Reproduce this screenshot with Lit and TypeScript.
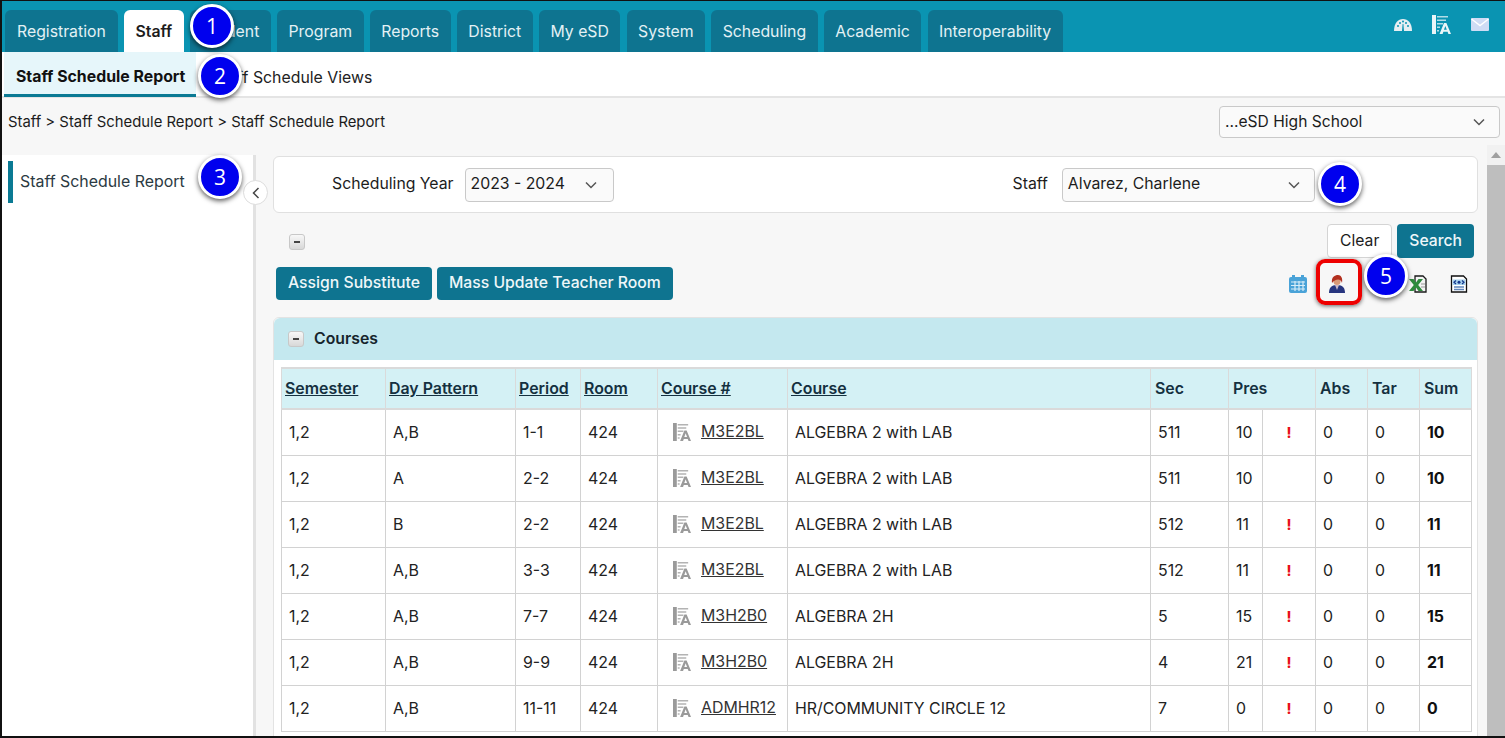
import { LitElement, html, css, svg } from "lit";
import { customElement } from "lit/decorators.js";

const TABS = ["Registration", "Staff", "Student", "Program", "Reports", "District", "My eSD", "System", "Scheduling", "Academic", "Interoperability"];
const ROWS = [
  ["1,2", "A,B", "1-1", "424", "M3E2BL", "ALGEBRA 2 with LAB", "511", "10", true, "0", "0", "10"],
  ["1,2", "A", "2-2", "424", "M3E2BL", "ALGEBRA 2 with LAB", "511", "10", false, "0", "0", "10"],
  ["1,2", "B", "2-2", "424", "M3E2BL", "ALGEBRA 2 with LAB", "512", "11", true, "0", "0", "11"],
  ["1,2", "A,B", "3-3", "424", "M3E2BL", "ALGEBRA 2 with LAB", "512", "11", true, "0", "0", "11"],
  ["1,2", "A,B", "7-7", "424", "M3H2B0", "ALGEBRA 2H", "5", "15", true, "0", "0", "15"],
  ["1,2", "A,B", "9-9", "424", "M3H2B0", "ALGEBRA 2H", "4", "21", true, "0", "0", "21"],
  ["1,2", "A,B", "11-11", "424", "ADMHR12", "HR/COMMUNITY CIRCLE 12", "7", "0", true, "0", "0", "0"],
];
const COLS = [104, 130, 65, 77, 130, 363, 78, 34, 53, 52, 52, 52];
const chevron = svg`<svg class="chev" viewBox="0 0 12 8" width="12" height="8"><path d="M1 1.5 6 6.5 11 1.5" fill="none" stroke="#555" stroke-width="1.5"/></svg>`;
const faIcon = (c: string, w = 19, h = 19) => svg`<svg viewBox="0 0 19 19" width=${w} height=${h}><rect x="0" y="0" width="4" height="19" fill=${c}/><path d="M5 1h11v1.6H5zM5 4.5h9v1.6H5zM5 8h6v1.6H5zM5 11.5h3v1.6H5zM5 15h2v1.6H5z" fill=${c} opacity=".75"/><path d="M7.5 19 12 8h2.4L19 19h-2.6l-.8-2.2h-4.2l-.8 2.2zM11.9 14.8h2.9l-1.4-3.9z" fill=${c}/></svg>`;

@customElement("app-root")
export class AppRoot extends LitElement {
  static styles = css`
    :host { display: block; width: 1505px; height: 738px; font-family: Inter, "Liberation Sans", sans-serif; color: #1c1c1c; }
    * { box-sizing: border-box; }
    .page { position: relative; width: 1505px; height: 738px; overflow: hidden; display: flex; flex-direction: column; background: #f7f7f7;
      border-top: 1px solid #111; border-left: 2px solid #111; border-bottom: 2px solid #111; }
    .top { height: 51px; flex: none; background: #0a94b2; display: flex; align-items: flex-end; justify-content: space-between; padding-left: 3px; }
    .tabs { display: flex; gap: 6.2px; }
    .tab { height: 42px; padding: 0 11.5px; border-radius: 6px 6px 0 0; background: #0e7490; color: #e3f1f5; font-size: 15.8px; display: flex; align-items: center; }
    .tab:first-child { padding-left: 12px; padding-right: 12px; }
    .tab.on { background: #fff; color: #1c1c1c; font-weight: 600; }
    .topicons { align-self: flex-start; display: flex; align-items: center; gap: 20px; padding: 14px 16px 0 0; }
    .sub { height: 46px; flex: none; background: #fff; display: flex; align-items: stretch; padding-left: 2px; border-bottom: 2px solid #e4e4e4; }
    .sub div { font-size: 15.85px; padding: 6px 12px 0; display: flex; align-items: center; }
    .sub .on { width: 192px; font-weight: 700; background: #e6f6fa; border-bottom: 3px solid #0a7a94; color: #111; white-space: nowrap; margin-bottom: -1px; }
    .sub .other { padding-left: 17px; white-space: nowrap; color: #222; }
    .crumbrow { height: 57px; flex: none; display: flex; justify-content: space-between; padding: 8px 5px 0 6px; }
    .crumb { font-size: 14.85px; line-height: 33px; height: 32px; }
    .sel { background: #fafafa; border: 1px solid #c9c9c9; border-radius: 4px; display: flex; align-items: center; justify-content: space-between; font-size: 15.8px; }
    .sel span { padding-bottom: 2px; }
    .school { width: 281px; height: 32px; padding: 0 14px 0 5px; font-size: 15.6px; }
    .body { flex: 1; display: flex; min-height: 0; }
    .side { width: 254px; flex: none; background: #fff; border-right: 3px solid #e2e2e2; padding: 6px 0 0 6px; }
    .sideitem { height: 42px; border-left: 5px solid #0a7a94; padding: 0 0 2px 7px; font-size: 15.9px; color: #2b3a42; display: flex; align-items: center; }
    .collapse { position: absolute; left: 241px; top: 179px; width: 25px; height: 25px; background: #fff; border: 1px solid #ddd; border-radius: 50%; display: flex; align-items: center; justify-content: center; }
    .main { width: 1231px; flex: none; padding: 1px 9px 0 17px; min-width: 0; }
    .filter { height: 57px; background: #fff; border: 1px solid #e0e0e0; border-radius: 6px; display: flex; align-items: center; font-size: 15.8px; }
    .lbl1 { margin-left: 58px; margin-right: 11px; padding-bottom: 2px; }
    .year { width: 149px; height: 34px; padding: 0 16px 0 5px; }
    .lbl2 { margin-left: 399px; margin-right: 14px; padding-bottom: 2px; }
    .staff { width: 253px; height: 34px; padding: 0 14px 0 5px; }
    .actions { height: 46px; padding: 11px 4px 0 16px; display: flex; justify-content: space-between; }
    .mini { width: 16px; height: 16px; margin-top: 10px; border: 1px solid #c8c8c8; border-radius: 3px; background: linear-gradient(#f8f8f8, #d8d8d8); display: flex; align-items: center; justify-content: center; flex: none; }
    .mini i { display: block; width: 6px; height: 2px; background: #444; }
    .rightbtns { display: flex; gap: 5px; }
    .btn { height: 34px; padding: 0 12px 2px; border-radius: 4px; background: #0e7490; color: #eef7f9; font-size: 15.7px; font-weight: 500; display: flex; align-items: center; border: 0; white-space: nowrap; }
    .btn.plain { background: #fff; color: #1c1c1c; border: 1px solid #d4d4d4; font-weight: 400; margin-left: 1px; }
    .tools { height: 58px; padding: 8px 0 0 3px; display: flex; justify-content: space-between; align-items: flex-start; }
    .tools .l { display: flex; gap: 5px; }
    .tools .btn { height: 33px; font-size: 15.75px; }
    .tools .r { display: flex; align-items: center; height: 33px; margin-right: -1px; }
    .tools .r span { width: 41px; display: flex; justify-content: center; }
    .tools .r .cal { margin-right: -2px; }
    .tools .r .xl { margin-left: 40px; }
    .panel { background: #fff; border: 1px solid #e3e3e3; border-radius: 6px 6px 0 0; padding-bottom: 10px; }
    .phead { height: 42px; background: #c4e8ef; border-radius: 6px 6px 0 0; display: flex; align-items: center; gap: 10px; padding: 0 0 2px 14px; font-weight: 600; font-size: 15.8px; color: #16242c; }
    .phead .mini { margin: 2px 0 0; }
    table { border-collapse: collapse; table-layout: fixed; width: 1190px; margin: 7px 0 0 7px; font-size: 15.9px; }
    th { height: 41px; background: #d4f1f5; border: 2px solid #dadada; border-width: 2px 1px; text-align: left; padding: 0 0 0 3px; font-weight: 600; font-size: 15.9px; color: #14303f; text-decoration: underline; white-space: nowrap; }
    th.nu { text-decoration: none; padding-left: 4px; }
    td { height: 46px; border: 1.5px solid #d2d2d2; padding: 0 0 0 7px; color: #222; white-space: nowrap; }
    td b { font-weight: 700; color: #111; }
    .course { display: flex; align-items: center; gap: 9px; padding-left: 8px; }
    .course u { color: #333; position: relative; top: -1px; left: 1px; }
    td.warn { text-align: center; padding: 0; color: #e8101a; font-weight: 800; font-size: 14px; }
    .scroll { flex: 1; background: #f1f1f1; margin-top: -10px; position: relative; display: flex; flex-direction: column; }
    .scroll .up { height: 20px; flex: none; display: flex; justify-content: center; padding-top: 7px; }
    .scroll .thumb { flex: 1; background: #bebebe; }
    .bub { position: absolute; width: 44px; height: 44px; border-radius: 50%; background: #0000ee; border: 3px solid #fff; box-shadow: 0 2px 5px rgba(0,0,0,.65); color: #fff; font-size: 21px; font-family: "Open Sans", "Liberation Sans", sans-serif; display: flex; align-items: center; justify-content: center; }
    .hl { position: absolute; left: 1314px; top: 258px; width: 46px; height: 46px; border: 4px solid #ee0000; border-radius: 9px; box-shadow: 0 1px 4px rgba(0,0,0,.6); }
  `;

  render() {
    return html`<div class="page">
      <div class="top">
        <div class="tabs">${TABS.map((t) => html`<div class="tab ${t === "Staff" ? "on" : ""}">${t}</div>`)}</div>
        <div class="topicons">
          <svg viewBox="0 0 18 14" width="18" height="14"><path d="M0 13C0 5 4 1 9 1s9 4 9 12z" fill="#e6eef2"/><g fill="#0a94b2"><circle cx="4" cy="8" r="1"/><circle cx="6" cy="5" r="1"/><circle cx="9" cy="3.6" r="1"/><circle cx="12" cy="5" r="1"/><circle cx="14" cy="8" r="1"/><path d="M8 13l.6-7h.8l.6 7z"/></g></svg>
          ${faIcon("#eaf5f8")}
          <svg viewBox="0 0 18 13" width="18" height="13"><rect width="18" height="13" rx="1" fill="#cfdcf5"/><path d="M.5 1 9 7.5 17.5 1" fill="none" stroke="#fff" stroke-width="1.4"/></svg>
        </div>
      </div>
      <div class="sub"><div class="on">Staff Schedule Report</div><div class="other">Staff Schedule Views</div></div>
      <div class="crumbrow"><div class="crumb">Staff &gt; Staff Schedule Report &gt; Staff Schedule Report</div><div class="sel school"><span>...eSD High School</span>${chevron}</div></div>
      <div class="body">
        <div class="side"><div class="sideitem">Staff Schedule Report</div></div>
        <div class="main">
          <div class="filter">
            <span class="lbl1">Scheduling Year</span>
            <div class="sel year"><span>2023 - 2024</span>${chevron}</div>
            <span class="lbl2">Staff</span>
            <div class="sel staff"><span>Alvarez, Charlene</span>${chevron}</div>
          </div>
          <div class="actions">
            <div class="mini"><i></i></div>
            <div class="rightbtns"><div class="btn plain">Clear</div><div class="btn">Search</div></div>
          </div>
          <div class="tools">
            <div class="l"><div class="btn">Assign Substitute</div><div class="btn">Mass Update Teacher Room</div></div>
            <div class="r">
              <span class="cal"><svg viewBox="0 0 18 18" width="18" height="18"><rect x="0" y="2" width="18" height="16" rx="2" fill="#4aa3d8"/><rect x="3" y="0" width="3" height="4" fill="#4aa3d8"/><rect x="12" y="0" width="3" height="4" fill="#4aa3d8"/><path d="M2 7h14M2 10.5h14M2 14h14M6 6v10M10 6v10M14 6v10" stroke="#d8edf8" stroke-width="1.2"/></svg></span>
              <span><svg viewBox="0 0 16 18" width="16" height="18"><path d="M0 18c0-5 2-8 8-8s8 3 8 8z" fill="#27357f"/><path d="M6 10l2 5 2-5z" fill="#c9b8c8"/><circle cx="8" cy="6.500" r="3.500" fill="#d99a78"/><path d="M3 8C2 2 6 0 9 0s5 3 4 8c-.5-2-2-3.500-4-3.500S4.500 6 3 8z" fill="#b2301f"/></svg></span>
              <span class="xl"><svg viewBox="0 0 18 18" width="18" height="18"><path d="M6 1h8l3 3v13H6z" fill="#f4f4f4" stroke="#1a1a1a" stroke-width="1.300"/><path d="M12 9h4M12 12h4" stroke="#999"/><path d="M0 4h4.500L7 7.500 9.500 4H14l-4.800 6L14 16H9.500L7 12.500 4.500 16H0l4.800-6z" fill="#2e8b3d"/></svg></span>
              <span><svg viewBox="0 0 18 18" width="18" height="18"><path d="M1.500 1h12l3 3v13h-15z" fill="#fff" stroke="#111" stroke-width="1.300"/><rect x="2.500" y="4.500" width="13" height="5.500" fill="#a8d2ee"/><path d="M6 5.500 4 7.300 6 9M12 5.500 14 7.300 12 9" fill="none" stroke="#14378c" stroke-width="1.200"/><circle cx="9" cy="7.300" r="1.500" fill="#14378c"/><path d="M4 12h10M4 14.500h10" stroke="#5f86bc" stroke-width="1.400"/></svg></span>
            </div>
          </div>
          <div class="panel">
            <div class="phead"><div class="mini"><i></i></div>Courses</div>
            <table>
              <colgroup>${COLS.map((w) => html`<col style="width:${w}px">`)}</colgroup>
              <tr>
                <th>Semester</th><th>Day Pattern</th><th>Period</th><th>Room</th><th>Course #</th><th>Course</th>
                <th class="nu">Sec</th><th class="nu" colspan="2">Pres</th><th class="nu">Abs</th><th class="nu">Tar</th><th class="nu">Sum</th>
              </tr>
              ${ROWS.map((r) => html`<tr>
                <td>${r[0]}</td><td>${r[1]}</td><td>${r[2]}</td><td>${r[3]}</td>
                <td><div class="course">${faIcon("#9a9a9a", 18, 18)}<u>${r[4]}</u></div></td>
                <td>${r[5]}</td><td>${r[6]}</td><td>${r[7]}</td>
                <td class="warn">${r[8] ? "!" : ""}</td>
                <td>${r[9]}</td><td>${r[10]}</td><td><b>${r[11]}</b></td>
              </tr>`)}
            </table>
          </div>
        </div>
        <div class="scroll"><div class="up"><svg viewBox="0 0 10 6" width="10" height="6"><path d="M0 6 5 0l5 6z" fill="#a0a0a0"/></svg></div><div class="thumb"></div></div>
      </div>
      <div class="collapse"><svg viewBox="0 0 8 12" width="8" height="12"><path d="M6.500 1 1.500 6l5 5" fill="none" stroke="#444" stroke-width="1.500"/></svg></div>
      <div class="hl"></div>
      <div class="bub" style="left:188px;top:3px">1</div>
      <div class="bub" style="left:196px;top:53px">2</div>
      <div class="bub" style="left:196px;top:154px">3</div>
      <div class="bub" style="left:1316px;top:161px">4</div>
      <div class="bub" style="left:1362px;top:253px">5</div>
    </div>`;
  }
}
